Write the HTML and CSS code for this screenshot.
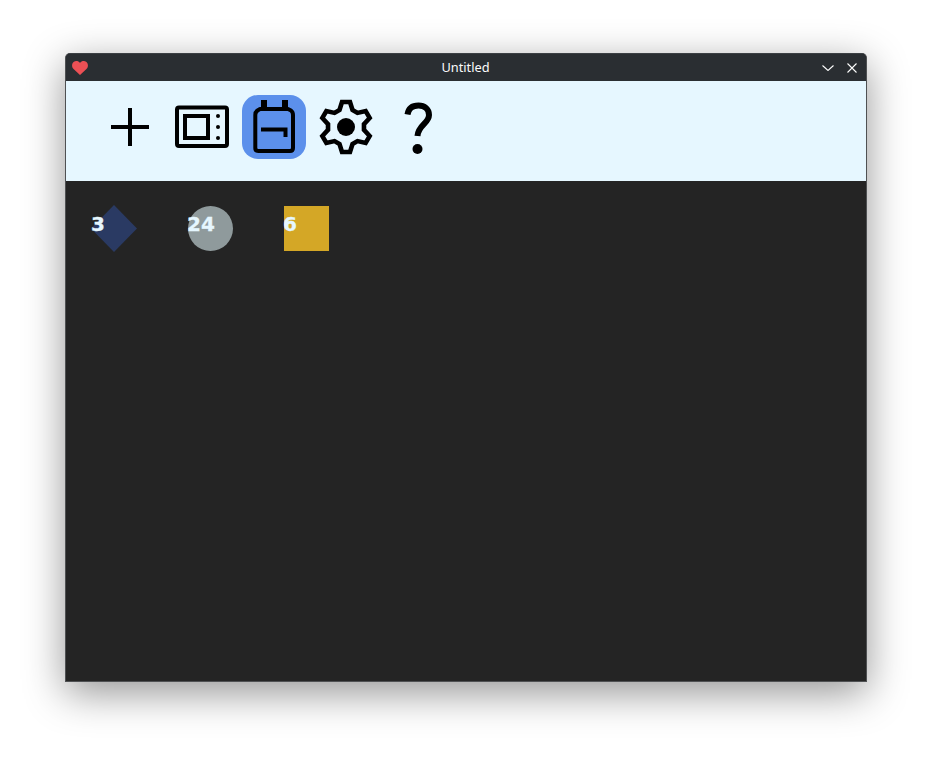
FILE: index.html
```html
<!DOCTYPE html>
<html lang="en">
<head>
<meta charset="utf-8">
<title>Untitled</title>
<link rel="stylesheet" href="styles.css">
</head>
<body>
<div class="window">
  <header class="titlebar">
    <svg class="heart" viewBox="0 0 17 15"><path d="M8.5 15 L1.6 8.6 C-0.6 6.4 -0.4 2.8 1.6 1.1 C3.8 -0.6 6.8 -0.2 8.5 2.1 C10.2 -0.2 13.2 -0.6 15.4 1.1 C17.4 2.8 17.6 6.4 15.4 8.6 Z"/></svg>
    <span class="title">Untitled</span>
    <div class="controls">
      <svg class="chevron" viewBox="0 0 12 6"><path d="M0.5 0.5 L6 5.5 L11.5 0.5"/></svg>
      <svg class="close" viewBox="0 0 10 10"><path d="M0.5 0.5 L9.5 9.5 M9.5 0.5 L0.5 9.5"/></svg>
    </div>
  </header>
  <nav class="toolbar">
    <div class="tool">
      <svg viewBox="0 0 64 64"><path d="M13 32 H51 M32 13 V51"/></svg>
    </div>
    <div class="tool">
      <svg viewBox="0 0 64 64"><rect x="7" y="12.5" width="50" height="38.5" rx="2"/><rect x="15" y="21" width="23" height="22"/><circle class="dot" cx="48" cy="21" r="2"/><circle class="dot" cx="48" cy="32" r="2"/><circle class="dot" cx="48" cy="43" r="2"/></svg>
    </div>
    <div class="tool tool-active">
      <svg viewBox="0 0 64 64"><path class="body" d="M13.3 20 Q13.3 17 15.5 15.5 L18 14 H46 L49 15.5 Q51 17 51 20 V53 Q51 56 48 56 H16.3 Q13.3 56 13.3 53 Z"/><path class="ears" d="M22 14 V5 M43 14 V5"/><path d="M19 34.5 H43.5 V42"/></svg>
    </div>
    <div class="tool">
      <svg viewBox="-32 -32 64 64"><path class="gear" d="M-6.5 -17 L-4 -25 L4 -25 L6.5 -17 L11.47 -14.13 L19.65 -15.96 L23.65 -9.04 L17.97 -2.87 L17.97 2.87 L23.65 9.04 L19.65 15.96 L11.47 14.13 L6.5 17 L4 25 L-4 25 L-6.5 17 L-11.47 14.13 L-19.65 15.96 L-23.65 9.04 L-17.97 2.87 L-17.97 -2.87 L-23.65 -9.04 L-19.65 -15.96 L-11.47 -14.13 Z"/><circle class="dot" cx="0" cy="0" r="9"/></svg>
    </div>
    <div class="tool">
      <svg viewBox="0 0 64 64"><path class="hook" d="M21.5 19.5 C22.5 13 27 10.5 32.5 10.5 C38.5 10.5 43 14 43 20 C43 28.5 32 30 31.5 41"/><circle class="dot" cx="31.5" cy="54" r="5"/></svg>
    </div>
  </nav>
  <main class="canvas">
    <div class="item item-diamond"><span class="count">3</span></div>
    <div class="item item-circle"><span class="count">24</span></div>
    <div class="item item-square"><span class="count">6</span></div>
  </main>
</div>
</body>
</html>
```

FILE: styles.css
```css
* { box-sizing: border-box; }

html, body { height: 100%; }

body {
  margin: 0;
  padding: 53px 65px 77px;
  background: #fff;
  overflow: hidden;
  font-family: "Noto Sans", sans-serif;
}

.window {
  display: flex;
  flex-direction: column;
  height: 629px;
  border: 1px solid #4f5153;
  border-top-color: #3c4044;
  border-radius: 5px 5px 0 0;
  box-shadow: 0 11px 40px rgba(0, 0, 0, 0.42);
  overflow: hidden;
  background: #242424;
}

.titlebar {
  display: grid;
  grid-template-columns: 1fr auto 1fr;
  align-items: center;
  height: 27px;
  flex: none;
  padding: 0 9px 0 6px;
  background: #2a2e32;
  color: #fcfcfc;
}

.heart { width: 16px; height: 14px; fill: #ec5055; }

.title { font-size: 12.8px; line-height: 27px; transform: translateX(1px); }

.controls {
  display: flex;
  align-items: center;
  justify-content: flex-end;
  gap: 13px;
}

.chevron, .close {
  fill: none;
  stroke: #fcfcfc;
  stroke-width: 1.1;
}

.chevron { width: 12px; height: 6px; }
.close { width: 10px; height: 10px; }

.toolbar {
  display: flex;
  gap: 8px;
  height: 100px;
  flex: none;
  padding: 14px 32px;
  background: #e6f7ff;
}

.tool { width: 64px; height: 64px; border-radius: 16px; }

.tool svg {
  display: block;
  width: 64px;
  height: 64px;
  fill: none;
  stroke: #000;
  stroke-width: 4;
  stroke-linejoin: miter;
}

.tool .dot { fill: #000; stroke: none; }
.tool .hook { stroke-width: 6; }
.tool .gear { stroke-width: 4.6; }
.tool .ears { stroke-width: 6; }
.tool .body { stroke-linejoin: round; }
.tool-active { background: #5c90eb; }

.canvas {
  flex: 1;
  display: flex;
  gap: 51px;
  align-items: flex-start;
  padding: 25px 26px;
  background: #242424;
}

.item {
  position: relative;
  width: 45px;
  height: 45px;
  flex: none;
}

.item-diamond::before {
  content: "";
  position: absolute;
  inset: -1px 0 -1px -1px;
  background: #2a3a63;
  clip-path: polygon(50% 0, 100% 50%, 50% 100%, 0 50%);
}

.item-circle { background: #8f9a9c; border-radius: 50%; }
.item-square { background: #d4a726; }

.count {
  position: absolute;
  left: -1px;
  top: 7px;
  font: bold 20px/23px "DejaVu Sans", sans-serif;
  -webkit-text-stroke: 0.3px #e6f7ff;
  color: #e6f7ff;
}
```
